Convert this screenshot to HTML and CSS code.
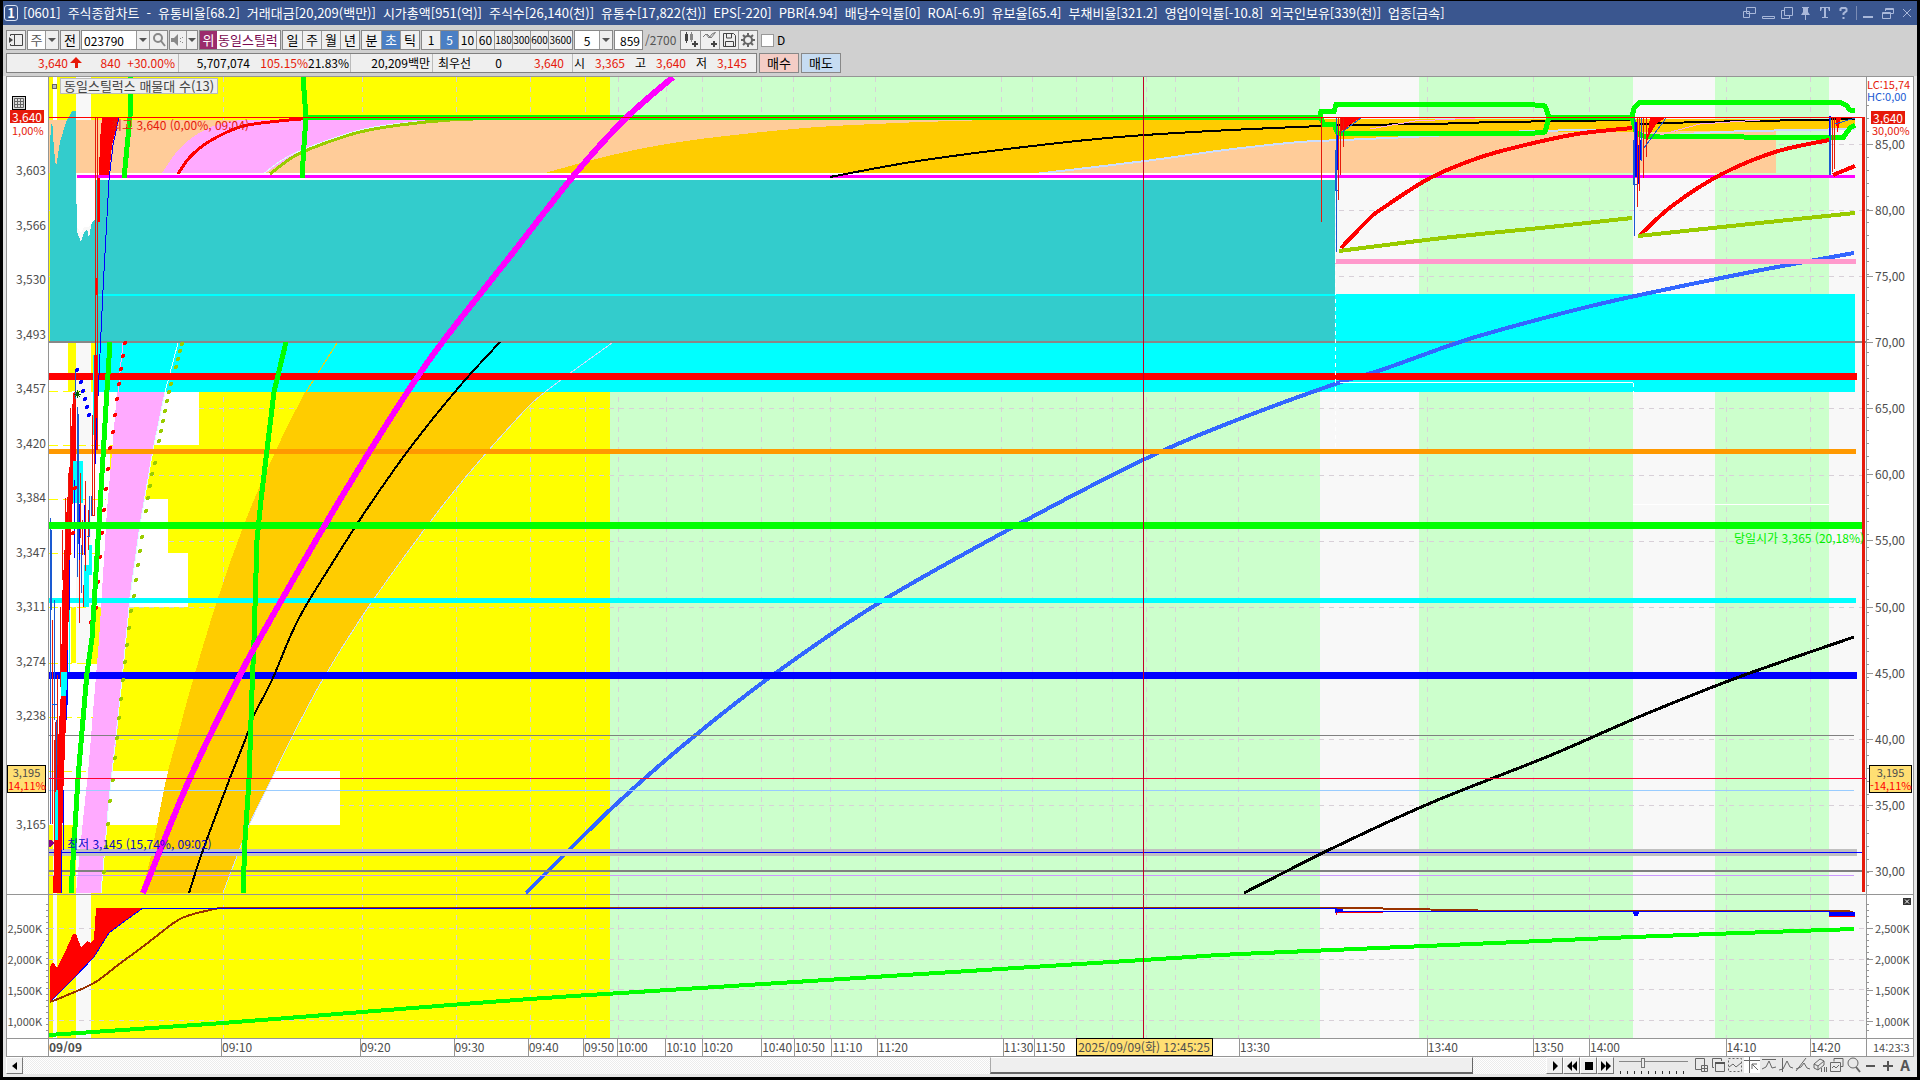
FILE: index.html
```html
<!DOCTYPE html>
<html lang="ko">
<head>
<meta charset="utf-8">
<title>[0601] 주식종합차트</title>
<link rel="stylesheet" href="styles.css">
</head>
<body>
<div class="window">
  <header class="titlebar">
    <span class="badge">1</span>
    <h1 class="title">
      <span>[0601]</span><span>주식종합차트</span><span>-</span><span>유통비율[68.2]</span><span>거래대금[20,209(백만)]</span><span>시가총액[951(억)]</span><span>주식수[26,140(천)]</span><span>유통수[17,822(천)]</span><span>EPS[-220]</span><span>PBR[4.94]</span><span>배당수익률[0]</span><span>ROA[-6.9]</span><span>유보율[65.4]</span><span>부채비율[321.2]</span><span>영업이익률[-10.8]</span><span>외국인보유[339(천)]</span><span>업종[금속]</span>
    </h1>
    <div class="wincontrols">
      <button aria-label="창 분리"><svg width="14" height="14"><path d="M4.500 1.500h9v6h-9zM1.500 5.500h6v6h-6z"/></svg></button>
      <button aria-label="접기"><svg width="14" height="14"><path d="M1.500 10.500h12v2h-12z"/></svg></button>
      <button aria-label="복사"><svg width="14" height="14"><path d="M4.500 1.500h8v8h-8zM4 4.500H1.500v8h8V10"/></svg></button>
      <button aria-label="고정"><svg width="14" height="14"><path class="solid" d="M3 1h7v1H9v4l2 3H7v5H6V9H2l2-3V2H3z"/></svg></button>
      <button aria-label="글꼴"><svg width="14" height="14"><path class="solid" d="M2 1h10v4h-1L10 2H8v9h2v1H4v-1h2V2H4L3 5H2z"/></svg></button>
      <button aria-label="도움말"><svg width="14" height="14"><path class="thick" d="M3.500 5V3l1-1h4l1 1v2L6.500 7.500V9M6.500 11v2"/></svg></button>
      <span class="bar"></span>
      <button aria-label="최소화"><svg width="14" height="14"><path class="solid" d="M1 10h10v2H1z"/></svg></button>
      <button aria-label="이전 크기"><svg width="14" height="14"><path d="M4.500 5V2.500h8v5H10M4 3.500h8M1.500 6.500h8v6h-8zM1 7.500h8"/></svg></button>
      <button aria-label="닫기"><svg width="14" height="14"><path d="M3 3l8 8M11 3l-8 8"/></svg></button>
    </div>
  </header>

  <div class="toolbar">
    <button class="btn w20" aria-label="패널"><svg width="14" height="14"><path class="ln" d="M1.500 3V1.500h12v11h-12V11M5.500 1v11"/><path class="ink" d="M0 4l4 3-4 3z"/></svg></button>
    <div class="combo"><button class="cell muted">주</button><button class="drop" aria-label="종목 구분"></button></div>
    <button class="btn w20">전</button>
    <div class="combo code"><input class="field" aria-label="종목코드" value="023790"><button class="drop" aria-label="코드 목록"></button><button class="seg w18" aria-label="검색"><svg width="14" height="14"><circle class="lg" cx="6" cy="5" r="4"/><path class="lg" d="M9 8l4 5"/></svg></button></div>
    <div class="combo"><button class="seg w16" aria-label="소리"><svg width="14" height="14"><path class="gry" d="M0 5h3l4-4v12L3 9H0zM9 5h1v1H9zM9 8h1v1H9zM11 4h1v1h-1zM11 9h1v1h-1z"/></svg></button><button class="drop small" aria-label="소리 설정"></button></div>
    <div class="combo name"><span class="tag">위</span><span class="stock">동일스틸럭</span></div>
    <div class="combo"><button class="seg">일</button><button class="seg">주</button><button class="seg">월</button><button class="seg">년</button></div>
    <div class="combo"><button class="seg">분</button><button class="seg on">초</button><button class="seg">틱</button></div>
    <div class="combo nums"><button class="seg">1</button><button class="seg on">5</button><button class="seg">10</button><button class="seg">60</button><button class="seg">180</button><button class="seg">300</button><button class="seg">600</button><button class="seg wide">3600</button></div>
    <div class="combo"><input class="field num" aria-label="주기" value="5"><button class="drop" aria-label="주기 목록"></button></div>
    <div class="count"><input class="field" aria-label="표시 봉 수" value="859"><span>/2700</span></div>
    <div class="combo tools">
      <button class="seg" aria-label="봉 추가"><svg width="16" height="16"><path class="ink" d="M2 2h3v7H2zM3 0h1v11H3zM11 9h2v6h-2zM9 11h6v2H9z"/><path class="gry" d="M7 2h3v6H7zM8 0h1v10H8z"/></svg></button>
      <button class="seg" aria-label="지표 추가"><svg width="16" height="16"><path class="lg1" d="M1 5l3-3 3 4 3-4 4-2M5 2l4 4 4-5"/><path class="ink" d="M11 9h2v6h-2zM9 11h6v2H9z"/></svg></button>
      <button class="seg" aria-label="저장"><svg width="16" height="16"><path class="ln" d="M2.500 1.500h10l2 2v11h-12zM5.500 2v4h5V2M4.500 14V9.500h8V14"/></svg></button>
      <button class="seg" aria-label="설정"><svg width="16" height="16"><circle class="gear" cx="8" cy="8" r="4"/><path class="gear" d="M8 1v3M8 12v3M1 8h3M12 8h3M3 3l2 2M11 11l2 2M3 13l2-2M11 5l2-2"/></svg></button>
    </div>
    <label class="check"><input type="checkbox">D</label>
  </div>

  <div class="quotes">
    <div class="strip">
      <span class="q price red">3,640<svg width="13" height="12"><path d="M6 0l6 6H8v5H5V6H0z" fill="#e61a0a"/></svg></span>
      <span class="q chg red">840&nbsp; +30.00%</span>
      <span class="q vol">5,707,074</span>
      <span class="q rate red">105.15%</span>
      <span class="q turn">21.83%</span>
      <span class="q amt">20,209백만</span>
      <span class="q best">최우선</span>
      <span class="q zero">0</span>
      <span class="q bid red">3,640</span>
      <span class="q ohl"><i>시</i><b>3,365</b></span>
      <span class="q ohl"><i>고</i><b>3,640</b></span>
      <span class="q ohl"><i>저</i><b>3,145</b></span>
    </div>
    <button class="order buy">매수</button>
    <button class="order sell">매도</button>
  </div>

  <main class="panel">
    <div class="axis left main-axis">
      <button class="gridbtn" aria-label="표 보기"><svg width="10" height="10"><path d="M.5.5h9v9h-9zM3.500 1v8M6.500 1v8M1 3.500h8M1 6.500h8" fill="none" stroke="#666"/></svg></button>
      <span class="now">3,640</span><span>3,603</span><span>3,566</span><span>3,530</span><span>3,493</span><span>3,457</span><span>3,420</span><span>3,384</span><span>3,347</span><span>3,311</span><span>3,274</span><span>3,238</span><span>&nbsp;</span><span>3,165</span>
      <div class="nowpct">1,00%</div>
      <div class="cross">3,195<em>14,11%</em></div>
    </div>

    <div class="plot">
      <svg viewBox="49 77 1817 817" preserveAspectRatio="none" fill="none" shape-rendering="crispEdges">
        <rect x="49" y="77" width="1817" height="817" fill="#f8f8f8"/>
        <path fill="#ff0" d="M49 77h4v817h-4zM57 77h19v817h-19zM91 77h519v817h-519z"/>
        <path fill="#cfc" d="M610 77h710v817h-710zM1419 77h214v817h-214zM1715 77h114v817h-114z"/>
        <path stroke="#d8d0d8" stroke-dasharray="5 5" d="M223.500 77v817M362.500 77v817M456.500 77v817M530.500 77v817M585.500 77v817M618.500 77v817M666.500 77v817M702.500 77v817M761.500 77v817M793.500 77v817M830.500 77v817M875.500 77v817M1001.500 77v817M1032.500 77v817M1076.500 77v817M1112.500 77v817M1146.500 77v817M1175.500 77v817M1238.500 77v817M1427.500 77v817M1533.500 77v817M1589.500 77v817M1726.500 77v817M1810.500 77v817"/>
        <path stroke="#d8d0d8" stroke-dasharray="5 5" d="M49 144.500h1817M49 210.500h1817M49 276.500h1817M49 408.500h1817M49 475.500h1817M49 541.500h1817M49 607.500h1817M49 739.500h1817M49 805.500h1817"/>
        <path fill="#fff" d="M53 77h4v43h-4zM49 342h19v49h-19zM49 391h150v54h-150zM49 445h61v54h-61zM49 499h119v54h-119zM49 553h139v54h-139zM49 607h22v56h-22zM49 663h58v162h-58zM49 771h291v54h-291z"/>
        <path fill="#f8f8f8" d="M76 342h15v321h-15z"/>
        <path stroke="#ff0" stroke-dasharray="9 5" d="M49 391.500h57M49 445.500h57M49 499.500h57M49 553.500h57M49 607.500h57M49 663.500h57M49 717.500h50M49 771.500h48"/>

        <!-- 3,603 - 3,640 volume zone -->
        <path fill="#fc9" d="M49 120h1727v53h-1727z"/>
        <path fill="#faf" data-curve="162 173 170 161 180 148 193 137 213 126 240 120|470 119 404 125 360 132 310 148 265 173"/>
        <path fill="#fc0" data-curve="545 173 612 155 686 141 793 129 874 124 954 121 1040 119|1855 119 1855 129|1640 132 1500 132 1430 136 1343 140 1300 142 1225 150 1145 161 1035 173"/>
        <path stroke="#cdf" stroke-width="2" data-curve="1035 174 1145 161 1225 150 1300 142 1343 140 1430 136 1500 132 1632 129;1640 138 1720 132 1855 129"/>
        <path stroke="#dff" data-curve="262 175 293 154 360 130 420 121"/>
        <path fill="#fff" d="M77 173h1258v8h-1258z"/>
        <path fill="#33cccc" d="M50 342V141L52 118 54 150 56 167 60 142 66 122 72 111H76V175L77 232 81 242 84 232 87 229 89 238 93 215 95 180H1335V342z"/>
        <path fill="#fff" d="M77 179h18v40l-6 8h-5l-3 6-4-6z"/>
        <path stroke="#f0f" stroke-width="3" d="M77 176.500H1855"/>

        <!-- 3,457 - 3,490 zone -->
        <path fill="#0ff" d="M96 343h1240v49h-1240zM1335 294h520v98h-520z"/>
        <path stroke="#0ff" stroke-width="2" d="M98 295H1335"/>

        <!-- moving average ribbons -->
        <path fill="#faf" d="M117 392L112 452 107 510 99 640 88 773 83 820 76 893H101L104 850 109 800 117 735 122 680 126 640 130 597 140 525 153 450 165 392z"/>
        <path stroke="#faf" d="M123 343L118 392"/>
        <path stroke="#dff" d="M178 343L165 392 153 450 140 525 130 597 122 680 109 800 101 893"/>
        <path fill="#fc0" data-curve="305 392 277 448 245 522 218 598 193 680 178 735 166 780 150 860 140 893|223 893 237 856 250 823 272 778 293 735 323 679 361 618 404 557 455 490 514 422 545 392"/>
        <path stroke="#fc0" d="M337 343L306 392"/>
        <path stroke="#cdf" data-curve="612 343 545 392 514 422 455 490 404 557 361 618 323 679 293 735 272 778 250 823 237 856 223 893"/>

        <!-- thin and thick price levels -->
        <path stroke="#888" stroke-width="2" d="M49 342H1866"/>
        <path stroke="#3366ff" stroke-width="4" data-curve="526 893 612 808 686 743 773 675 882 601 1019 524 1145 459 1224 425 1332 385 1384 369 1469 339 1567 312 1635 296 1751 272 1854 253"/>
        <path stroke="#f9c" stroke-width="5" d="M1335 261.500H1856"/>
        <path stroke="#f00" stroke-width="7" d="M49 376.500H1857"/>
        <path stroke="#f90" stroke-width="5" d="M49 451.500H1856"/>
        <path stroke="#0ff" stroke-width="5" d="M49 600.500H1856"/>
        <path stroke="#00f" stroke-width="7" d="M49 675.500H1857"/>
        <path stroke="#fff" stroke-dasharray="4 4" d="M1335.500 179V450M1633.500 383V400"/>
        <path stroke="#fff" d="M1340 382.500H1633M1633 504.500H1829"/>
        <path stroke="#808080" d="M49 735.500H1854"/>
        <path stroke="#9cf" d="M49 790.500H1854"/>
        <path stroke="#c0c0c0" stroke-width="7" d="M49 852.500H1857"/>
        <path stroke="#00f" d="M49 852.500H1862"/>
        <path stroke="#808080" stroke-width="2" d="M49 871H1862"/>
        <path stroke="#c9f" d="M49 875.500H1854"/>

        <!-- early session candles -->
        <path fill="#f00" d="M102 117H119L112 145 109 175H99L100 140zM73 393h3v67l-4 50-3 90-2 90-1 30-3 80-2 93h-8l4-133 4-70 1-90 4-80 4-60zM95 355h3v95h-3zM95 278h3v17h-3zM98 178h2v44h-2z"/>
        <path fill="#0ff" d="M73 461h10v42h-10zM84 565h5v42h-5zM61 672h7v24h-7zM54 790h4v50h-4zM89 545h3v30h-3zM93 355h2v80h-2zM69 600h1v72h-1z"/>
        <path stroke="#00f" d="M119 117L113 145 109 180 103 290 99 375 96 440 94 490M69.500 560v50M74.500 480v78M79.500 504v60M84.500 505v50M67.500 650v55M66.500 690v30M63.500 790v60M61.500 850v43"/>
        <path stroke="#e61a0a" d="M95.500 117V355M97.500 117V450M92.500 415v100h2V355M70.500 408v60M68.500 473v60M65.500 498v70M62.500 530v50M60.500 607v80M71.500 407h3v-15M80.500 473v65M79.500 560v63M82.500 520v35M85.500 481v90M88.500 510v40M83.500 585v22M57.500 675v90M55.500 722v70M52.500 620v204M54.500 740v110"/>
        <path stroke="#1a5ad2" d="M50.500 518V824M51.500 530v80M54.500 600v120M56.500 720v70M51.500 704h5M75.500 369v30M77.500 407v170M78.500 414v130M81.500 545v48M89.500 496v40h-3M91.500 496v20"/>
        <path stroke="#006400" d="M74 394h7M77.500 390v8M75 391l5 6M80 391l-5 6"/>
        <path fill="#808" d="M49 840h2l3 3-3 4h-2z"/>
        <path stroke="#00f" stroke-width="4" stroke-linecap="round" d="M77 370h0M81 382h0M83 391h0M85 399h0M87 407h0M89 415h0"/>
        <path stroke="#f00" stroke-width="4" stroke-linecap="round" d="M125 343h0M123 356h0M121 369h0M119 384h0M117 399h0M115 415h0M113 432h0M110 448h0M108 469h0M106 489h0M104 510h0M102 533h0M100 557h0M98 582h0M96 608h0M91 622h0M75 488h0M73 533h0"/>
        <path stroke="#9c0" stroke-width="4" stroke-linecap="round" d="M182 344h0M180 351h0M178 359h0M176 367h0M171 384h0M169 392h0M167 401h0M165 411h0M163 421h0M161 431h0M159 441h0M155 463h0M152 474h0M150 486h0M148 498h0M146 511h0M142 537h0M140 551h0M138 565h0M136 580h0M134 596h0M131 611h0M129 628h0M127 645h0M125 662h0M123 680h0M121 699h0M119 718h0M117 738h0M115 758h0M113 780h0M110 801h0M108 824h0M106 847h0M104 872h0"/>

        <!-- average lines -->
        <path stroke="#f00" stroke-width="3" data-curve="178 174 190 157 210 141 240 127 270 122 312 118"/>
        <path stroke="#9c0" stroke-width="3" data-curve="270 174 293 157 320 145 360 132 400 125 450 120 510 118"/>
        <path stroke="#000" stroke-width="2" data-curve="830 177 918 161 1041 145 1145 135 1322 126 1430 124 1500 122 1632 120;1640 124 1700 122 1755 121 1855 119;500 342 459 387 410 448 367 509 333 562 298 620 272 680 254 715 247 735 230 778 203 850 189 893"/>
        <path stroke="#000" stroke-width="3" data-curve="1244 893 1335 847 1433 802 1549 756 1641 716 1739 677 1854 637"/>
        <path stroke="#0f0" stroke-width="7" d="M49 525.500H1863"/>
        <path stroke="#0f0" stroke-width="5" d="M131 77L130 117 124 178M110 342L107 390 100 507 92 638 87 673 78 778 71 893M303 77L306 117 304 145 302 178M286 342L274 392 267 450 261 500 257 540 254 640 252 690 249 780 245 840 243 893"/>
        <path stroke="#0f0" stroke-width="5" d="M306 117.500H1320L1321 111.500H1334L1336 104.500H1530L1545 106 1549 117.500H1632L1634 108 1640 102.500H1840L1846 105 1850 110 1855 111M1320 117L1324 124.500H1334L1338 133.500H1530L1545 132 1549 117M1632 117L1636 132 1642 136 1843 138 1850 128 1855 125"/>
        <path stroke="#f0f" stroke-width="6" data-curve="673 77 625 119 575 174 508 259 435 352 383 430 322 530 260 638 240 675 190 778 143 893"/>
        <path stroke="#f00" stroke-width="4" data-curve="1341 248 1370 218 1383 208 1430 178 1478 158 1521 146 1577 134 1632 128;1640 235 1672 206 1720 175 1775 152 1829 140;1833 175 1855 166"/>
        <path stroke="#9c0" stroke-width="4" data-curve="1339 251 1443 238 1550 227 1632 218;1638 236 1750 224 1855 213"/>

        <!-- late session candles -->
        <path fill="#f00" d="M1340 118h20l-9 6-7 6-4 1zM1650 118h15l-9 6-7 12-3 8zM1836 118h5l-4 16z"/>
        <path fill="#00f" d="M1336 135h2v35h-2zM1634 122h3v55h-3zM1637 145h2v39h-2zM1640 140h2v20h-2zM1829 116h2v20h-2z"/>
        <path stroke="#e61a0a" d="M1321.500 117V222M1338.500 117V200M1340.500 117v58M1343.500 117v30M1637.500 117V207M1639.500 117v74M1643.500 117v61M1646.500 117v40M1834.500 117v52M1832.500 117v55"/>
        <path stroke="#1a5ad2" d="M1336.500 117V252M1335.500 150v40h2M1634.500 117V236M1633.500 140v44h3M1830.500 117v58M1829.500 140v35M1641.500 117v44M1361 118l-20 15M1666 118l-22 30M1855 118l-20 6"/>
        <path stroke="#fae" d="M1370 129l45-8 60-3M1660 135l40-11 60-4"/>
        <path stroke="#f00" d="M49 117.500H1864"/>
        <path stroke="#e61a0a" stroke-width="3" d="M1863.500 117V892"/>
        <path stroke="#f03" d="M49 778.500H1866"/>
        <path stroke="#c00028" d="M1143.500 77V894"/>
      </svg>
      <div class="legend"><i></i><span>동일스틸럭스 매물대 수(13)</span></div>
      <span class="note high">최고 3,640 (0,00%, 09:04)</span>
      <span class="note low">최저 3,145 (15,74%, 09:02)</span>
      <span class="note open">당일시가 3,365 (20,18%)</span>
    </div>

    <div class="axis right main-axis">
      <span>85,00</span><span>80,00</span><span>75,00</span><span>70,00</span><span>65,00</span><span>60,00</span><span>55,00</span><span>50,00</span><span>45,00</span><span>40,00</span><span>35,00</span><span>30,00</span>
      <div class="lchc"><div class="red">LC:15,74</div><div class="blue">HC:0,00</div></div>
      <div class="now tag-now">3,640</div><div class="nowpct">30,00%</div>
      <div class="cross">3,195<em>-14,11%</em></div>
    </div>

    <div class="axis left sub-axis"><span>2,500K</span><span>2,000K</span><span>1,500K</span><span>1,000K</span></div>
    <div class="plot sub">
      <svg viewBox="49 895 1817 143" preserveAspectRatio="none" fill="none" shape-rendering="crispEdges">
        <rect x="49" y="895" width="1817" height="143" fill="#f8f8f8"/>
        <path fill="#ff0" d="M49 895h4v143h-4zM57 895h19v143h-19zM91 895h519v143h-519z"/>
        <path fill="#cfc" d="M610 895h710v143h-710zM1419 895h214v143h-214zM1715 895h114v143h-114z"/>
        <path stroke="#d8d0d8" stroke-dasharray="5 5" d="M223.500 895v143M362.500 895v143M456.500 895v143M530.500 895v143M585.500 895v143M618.500 895v143M666.500 895v143M702.500 895v143M761.500 895v143M793.500 895v143M830.500 895v143M875.500 895v143M1001.500 895v143M1032.500 895v143M1076.500 895v143M1112.500 895v143M1146.500 895v143M1175.500 895v143M1238.500 895v143M1427.500 895v143M1533.500 895v143M1589.500 895v143M1726.500 895v143M1810.500 895v143M49 928.500h1817M49 959.500h1817M49 989.500h1817M49 1020.500h1817"/>
        <path fill="#f00" d="M50 1002V967L53 962 57 968 65 952 73 934H76L81 947 87 941 91 943 94 939 96 908H143L118 926 109 933 94 957 74 978z"/>
        <path stroke="#00f" d="M50 1002L74 978 94 957 109 933 118 926 143 908"/>
        <path stroke="#930" stroke-width="2" data-curve="50 1002 65 996 94 983 118 965 145 945 175 922 190 915 219 908"/>
        <path stroke="#930" stroke-width="2" d="M219 908H1360L1405 909 1455 910 1500 911H1848L1854 913"/>
        <path stroke="#00f" d="M143 908.500H1336L1340 911.500H1830"/>
        <path fill="#00f" d="M1335 909h8v2h22v2h-30zM1633 912h6l-1 4h-4zM1829 912h26v4h-26z"/>
        <path stroke="#f00" d="M1336.500 912v3M1338 912.500h45M1829 916.500h26"/>
        <path stroke="#0f0" stroke-width="4" data-curve="49 1035 223 1023 362 1012 530 999 700 988 1143 960 1240 954 1426 946 1633 937 1854 929"/>
        <path stroke="#c00028" d="M1143.500 895V1038"/>
      </svg>
    </div>
    <div class="axis right sub-axis"><button class="closebtn" aria-label="지표 닫기"><svg width="8" height="7"><path d="M2 1.500l4 4M6 1.500l-4 4" stroke="#fff"/></svg></button><span>2,500K</span><span>2,000K</span><span>1,500K</span><span>1,000K</span></div>

    <div class="corner"></div>
    <div class="times">
      <span style="flex-grow:174"><b>09/09</b></span><span style="flex-grow:139">09:10</span><span style="flex-grow:94">09:20</span><span style="flex-grow:74">09:30</span><span style="flex-grow:55">09:40</span><span style="flex-grow:33">09:50</span><span style="flex-grow:48">10:00</span><span style="flex-grow:36">10:10</span><span style="flex-grow:59">10:20</span><span style="flex-grow:32">10:40</span><span style="flex-grow:37">10:50</span><span style="flex-grow:45">11:10</span><span style="flex-grow:126">11:20</span><span style="flex-grow:31">11:30</span><span style="flex-grow:206">11:50</span><span style="flex-grow:189">13:30</span><span style="flex-grow:106">13:40</span><span style="flex-grow:56">13:50</span><span style="flex-grow:137">14:00</span><span style="flex-grow:84">14:10</span><span style="flex-grow:56">14:20</span>
      <div class="timebox">2025/09/09(화) 12:45:25</div>
    </div>
    <div class="last">14:23:3</div>
  </main>

  <footer class="bottom">
    <button class="sb" aria-label="왼쪽으로"><svg width="8" height="10"><path d="M6 1v8L1 5z"/></svg></button>
    <div class="track"><div class="thumb"></div></div>
    <div class="play">
      <button class="sb" aria-label="재생"><svg width="12" height="10"><path d="M4 0l5 5-5 5z"/></svg></button>
      <button class="sb" aria-label="느리게"><svg width="12" height="10"><path d="M6 0v10L1 5zM11 0v10L6 5z"/></svg></button>
      <button class="sb" aria-label="정지"><svg width="12" height="10"><path d="M2 1h8v8H2z"/></svg></button>
      <button class="sb" aria-label="빠르게"><svg width="12" height="10"><path d="M1 0l5 5-5 5zM6 0l5 5-5 5z"/></svg></button>
    </div>
    <div class="speed"><input type="range" aria-label="재생 속도" min="0" max="100" value="34"><div class="ticks"></div></div>
    <div class="icons">
      <button aria-label="차트 추가"><svg width="16" height="16"><path d="M9 12.500H2.500v-11h9V8M8.500 8.500h6v6h-6zM11.500 8.500v6M8.500 11.500h6"/></svg></button>
      <button aria-label="차트 복사"><svg width="16" height="16"><path d="M4 10.500H2.500v-9h9V4M5.500 5.500h9v9h-9z"/><path class="f" d="M5 5h10v2H5z"/></svg></button>
      <button aria-label="영역 선택"><svg width="16" height="16"><path stroke-dasharray="2 2" d="M1.500 1.500h13v13h-13z"/><path d="M2 10l4-3 3 3 5-4"/></svg></button>
      <button class="on" aria-label="십자선"><svg width="16" height="16"><path d="M0 3.500h16M5.500 0v16M8 7l6 6M8 12V7h5"/></svg></button>
      <button aria-label="수평선"><svg width="16" height="16"><path d="M1 2.500h14M1 12l4-2 3-6 3 7 4-1"/></svg></button>
      <button aria-label="수직선"><svg width="16" height="16"><path d="M4.500 1v14M1 13l4-1 4-8 3 6 3 1"/></svg></button>
      <button aria-label="추세선"><svg width="16" height="16"><path d="M1 14L11 1M1 12l5-2 3-4 3 5 3 1"/></svg></button>
      <button aria-label="전체 지우기"><svg width="16" height="16"><path d="M2 7l6-5 4 2v4l-6 5-4-2zM2 7l4 2 6-5M6 9v4M9.500 11v4M12.500 10v5M14.500 10v5"/></svg></button>
      <button aria-label="차트 겹치기"><svg width="16" height="16"><path d="M5 4.500v-3h9v8h-2M1.500 5.500h10v9h-10zM3 11l2-2 2 2 3-3"/></svg></button>
      <button aria-label="돋보기"><svg width="16" height="16"><circle cx="7" cy="6" r="5"/><path d="M10 10l4 5" stroke-width="2"/></svg></button>
      <button aria-label="축소"><svg width="16" height="16"><path class="f" d="M3 8h9v2H3z"/></svg></button>
      <button aria-label="확대"><svg width="16" height="16"><path class="f" d="M3 8h10v2H3zM7 4h2v10H7z"/></svg></button>
      <button class="auto">A</button>
    </div>
  </footer>
</div>
<script src="chart.js"></script>
</body>
</html>
```
FILE: styles.css
```css
* { box-sizing: border-box; }
body { margin: 0; background: #000; }
body, button, input {
  font-family: "Noto Sans CJK KR", sans-serif;
  font-size: 13px;
  line-height: 16px;
  color: #000;
}
button { margin: 0; padding: 0; border: 0; background: none; display: flex; align-items: center; justify-content: center; }
input { margin: 0; }
.red { color: #e61a0a; }
.blue { color: #1a5ad2; }

.window { height: 100vh; min-height: 640px; padding: 1px 3px 3px; display: flex; flex-direction: column; }
.window > * { background: #d0d0d0; }

/* title bar */
.window > .titlebar { height: 24px; background: #3a568f; display: flex; align-items: center; padding: 0 3px 0 1px; gap: 5px; }
.badge { width: 14px; height: 16px; border: 1px solid #dde4f4; border-radius: 3px; color: #fff; font-weight: bold; text-align: center; line-height: 14px; }
.title { margin: 0; flex: 1; display: flex; gap: 7px; font-size: 13px; line-height: 20px; font-weight: normal; color: #fff; white-space: nowrap; }
.wincontrols { display: flex; gap: 5px; align-items: center; }
.wincontrols svg { display: block; fill: none; stroke: #a9b8da; }
.wincontrols .solid { fill: #a9b8da; stroke: none; }
.wincontrols .thick { stroke-width: 2; }
.wincontrols .bar { width: 1px; height: 14px; background: #7c8db5; }

/* toolbar */
.toolbar { height: 28px; padding: 5px 3px 3px; display: flex; gap: 1px; white-space: nowrap; }
.btn, .combo { border: 1px solid #888; background: #efefef; height: 20px; display: flex; }
.combo > * + * { border-left: 1px solid #999; }
.w20 { width: 20px; }
.cell { width: 17px; background: #fff; }
.muted { color: #555; }
.seg { width: 19px; background: #efefef; }
.seg.w18 { width: 18px; }
.seg.w16 { width: 16px; }
.seg.on { background: #4a7fc4; color: #fff; }
.nums .seg { font-size: 12px; width: 18px; }
.nums .seg:nth-child(n+5) { font-size: 10px; }
.nums .seg.wide { width: 24px; }
.drop { width: 13px; background: #efefef; }
.drop.small { width: 11px; }
.drop::after { content: ""; border: 4px solid transparent; border-top-color: #555; border-bottom: 0; }
.field { border: 0; background: #fff; height: 18px; width: 54px; padding: 0 2px; font-size: 12px; }
.field.num { width: 24px; text-align: center; }
.combo.name { width: 82px; background: #fff; color: #7a0a50; align-items: center; }
.tag { width: 17px; height: 18px; line-height: 18px; background: #9b2c6c; color: #fff; text-align: center; }
.combo .stock { border: 0; padding-left: 1px; line-height: 18px; }
.count { display: flex; align-items: center; gap: 2px; color: #555; font-size: 12px; width: 65px; }
.count .field { width: 29px; height: 20px; border: 1px solid #888; text-align: right; }
.check { display: flex; align-items: center; gap: 3px; font-size: 12px; margin-left: 2px; }
.check input { appearance: none; width: 13px; height: 13px; border: 1px solid #999; background: #fff; }
.ln { fill: none; stroke: #444; }
.ink { fill: #444; }
.gry { fill: #888; }
.lg { fill: none; stroke: #888; stroke-width: 2; }
.lg1 { fill: none; stroke: #777; }
.gear { fill: none; stroke: #666; stroke-width: 2; }

/* quote strip */
.quotes { height: 23px; padding: 0 3px 3px; display: flex; gap: 2px; }
.strip { width: 751px; border: 1px solid #808080; background: #efefef; display: flex; align-items: center; white-space: nowrap; font-size: 12px; }
.q { display: block; height: 18px; line-height: 18px; text-align: right; }
.q i { font-style: normal; }
.q b { font-weight: normal; color: #e61a0a; }
.price { width: 76px; display: flex; align-items: center; justify-content: flex-end; gap: 2px; }
.chg { width: 96px; padding-right: 3px; border-right: 1px solid #bbb; }
.vol { width: 71px; }
.rate { width: 58px; }
.turn { width: 43px; padding-right: 2px; border-right: 1px solid #bbb; }
.amt { width: 82px; padding-right: 2px; border-right: 1px solid #bbb; }
.best { width: 38px; }
.zero { width: 31px; }
.bid { width: 71px; padding-right: 8px; border-right: 1px solid #bbb; }
.ohl { width: 61px; display: flex; justify-content: space-between; padding-left: 1px; padding-right: 9px; }
.order { width: 40px; border: 1px solid #888; }
.buy { background: #f4cdc6; }
.sell { background: #c6dcf2; }

/* chart panel */
.window > .panel {
  flex: 1; min-height: 0;
  background: #fff;
  display: grid;
  grid-template-columns: 42px 1fr 47px;
  grid-template-rows: minmax(0, 1fr) 144px 18px;
  border: 1px solid #959595;
  outline: 3px solid #e4e4e4;
  margin: 0 3px;
  clip-path: inset(0 -3px);
}
.axis { position: relative; display: flex; flex-direction: column; justify-content: space-between; color: #4d4d4d; font-size: 12px; line-height: 14px; white-space: nowrap; }
.axis.left { border-right: 1px solid #959595; text-align: right; padding-right: 2px; }
.axis.right { border-left: 1px solid #959595; }
.axis.right > span { padding-left: 8px; position: relative; }
.axis.right > span::before { content: ""; position: absolute; left: 0; top: 7px; width: 6px; height: 1px; background: #959595; }
.left.main-axis { padding-top: 33px; padding-bottom: 63px; }
.right.main-axis { padding-top: 60px; padding-bottom: 16px; }
.right.main-axis::before { content: ""; position: absolute; left: 0; top: 28px; bottom: 0; width: 2px; background: repeating-linear-gradient(#959595 0 1px, transparent 1px 13px); }
.axis.sub-axis { font-size: 11px; border-top: 1px solid #959595; padding: 26px 0 10px; }
.axis.left.sub-axis { padding-right: 6px; }
.sub-axis::after { content: ""; position: absolute; top: 9px; bottom: 4px; width: 2px; right: 0; background: repeating-linear-gradient(#959595 0 1px, transparent 1px 6px); }
.right.sub-axis::after { right: auto; left: 0; }
.gridbtn { position: absolute; left: 5px; top: 19px; width: 14px; height: 14px; border: 1px solid #000; background: #ddd; }
.now { width: 34px; height: 13px; line-height: 13px; margin-left: 3px; background: #e61a0a; color: #fff; text-align: center; }
.tag-now { position: absolute; left: 1px; top: 34px; }
.nowpct { position: absolute; left: 5px; top: 47px; color: #e61a0a; font-size: 11px; line-height: 12px; }
.cross { position: absolute; left: 0; bottom: 101px; width: 39px; height: 28px; border: 1px solid #000; background: #ffdf73; text-align: center; font-size: 11px; line-height: 13px; }
.right .cross { left: 2px; width: 43px; }
.cross em { display: block; font-style: normal; color: #f00; }
.lchc { position: absolute; left: 0; top: 1px; font-size: 11px; line-height: 12px; }
.closebtn { position: absolute; right: 2px; top: 3px; width: 8px; height: 7px; background: #333; }

.plot { position: relative; min-width: 0; min-height: 0; overflow: hidden; }
.plot svg { display: block; width: 100%; height: 100%; }
.plot.sub { border-top: 1px solid #959595; }
.legend { position: absolute; left: 3px; top: 1px; display: flex; align-items: center; gap: 3px; color: #444; }
.legend i { width: 5px; height: 5px; border: 1px solid #666; background: #bbb; }
.legend span { border: 1px solid #bbb; background: #efefef; padding: 0 3px; line-height: 14px; white-space: nowrap; }
.note { position: absolute; white-space: nowrap; font-size: 12px; line-height: 16px; }
.high { left: 62px; top: 40px; color: #e61a0a; }
.low { left: 18px; bottom: 42px; color: #0a0ac8; }
.open { right: 2px; top: 55.500%; color: #00f000; }

.corner, .times, .last { border-top: 1px solid #959595; color: #4d4d4d; font-size: 12px; line-height: 16px; }
.corner { border-right: 1px solid #959595; }
.times { position: relative; display: flex; }
.times > span { flex: 0 1 0; min-width: 0; white-space: nowrap; border-left: 1px solid #959595; }
.times > span:first-child { border-left: 0; }
.timebox { position: absolute; left: 56.500%; top: -1px; width: 137px; height: 18px; border: 1px solid #000; background: #ffdf73; text-align: center; white-space: nowrap; }
.last { border-left: 1px solid #959595; padding-left: 6px; white-space: nowrap; font-size: 11px; }

/* bottom bar */
.window > .bottom { height: 20px; background: #e9e9e9; display: flex; padding: 0 4px 3px 3px; }
.sb { width: 17px; height: 17px; background: #f0f0f0; border: 1px solid; border-color: #fff #777 #777 #fff; }
.track { flex: 1; display: flex; background: repeating-conic-gradient(#fff 0 25%, #ececec 0 50%) 0 0 / 2px 2px; }
.thumb { margin-left: 63.500%; width: 31.700%; background: #efefef; border: 1px solid; border-color: #fff #666 #666 #aaa; border-bottom-width: 2px; }
.play { display: flex; }
.speed { width: 72px; margin-left: 5px; }
.speed input { appearance: none; display: block; width: 69px; height: 11px; background: linear-gradient(#888, #888) 0 4px / 100% 1px no-repeat; }
.speed input::-webkit-slider-thumb { appearance: none; width: 4px; height: 10px; background: #eee; border: 1px solid #777; }
.ticks { height: 3px; margin: 3px 1px 0; background: repeating-linear-gradient(90deg, #333 0 1px, transparent 1px 7px); }
.icons { display: flex; gap: 1px; padding-left: 2px; }
.icons button { width: 16px; height: 16px; }
.icons .on { background: #fff; }
.icons svg { fill: none; stroke: #666; }
.icons .f { fill: #555; stroke: none; }
.icons .auto { font-weight: bold; font-size: 15px; color: #555; }
```
FILE: chart.js
```js
// Turns point lists into smooth paths.
// ";" starts a separate line, "|" joins the next run with a straight segment.
function smoothRun(numbers, command) {
  const p = [];
  for (let i = 0; i < numbers.length; i += 2) p.push([numbers[i], numbers[i + 1]]);
  let d = command + p[0].join(" ");
  for (let i = 0; i < p.length - 1; i++) {
    const a = p[i - 1] || p[i], b = p[i], c = p[i + 1], e = p[i + 2] || c;
    d += "C" + [
      b[0] + (c[0] - a[0]) / 6, b[1] + (c[1] - a[1]) / 6,
      c[0] - (e[0] - b[0]) / 6, c[1] - (e[1] - b[1]) / 6,
      c[0], c[1]
    ].join(" ");
  }
  return d;
}

document.querySelectorAll("[data-curve]").forEach(function (path) {
  path.setAttribute("d", path.dataset.curve.split(";").map(function (line) {
    return line.split("|").map(function (run, i) {
      return smoothRun(run.trim().split(/\s+/).map(Number), i ? "L" : "M");
    }).join("");
  }).join(""));
});
```
